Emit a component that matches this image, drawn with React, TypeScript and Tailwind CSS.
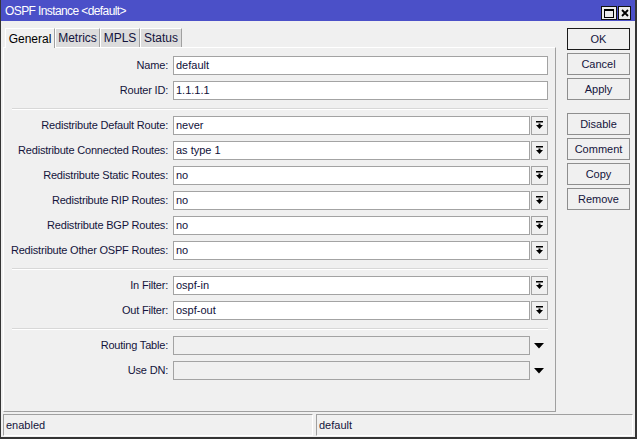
import React from "react";

const font = { fontFamily: '"Liberation Sans", Arial, sans-serif' };

function DropIcon() {
  return (
    <svg width="9" height="9" viewBox="0 0 9 9">
      <rect x="1" y="0" width="7" height="1.5" fill="#000" />
      <rect x="3.5" y="2.5" width="2" height="2" fill="#000" />
      <polygon points="1,4 8,4 4.5,8" fill="#000" />
    </svg>
  );
}

function Label({ text }: { text: string }) {
  return (
    <div className="w-[164px] shrink-0 text-right text-[#14143c] tracking-[-0.2px] whitespace-nowrap">
      {text}
    </div>
  );
}

function TextRow({ label, value }: { label: string; value: string }) {
  return (
    <div className="flex items-center h-[19px]">
      <Label text={label} />
      <div className="ml-[5px] flex-1 h-[19px] bg-white border border-[#a3a3a3] flex items-center pl-[2px] text-[#10103a]">
        {value}
      </div>
    </div>
  );
}

function DropRow({ label, value }: { label: string; value: string }) {
  return (
    <div className="flex items-center h-[19px]">
      <Label text={label} />
      <div className="ml-[5px] flex-1 h-[19px] bg-white border border-[#a3a3a3] flex items-center pl-[2px] text-[#10103a]">
        {value}
      </div>
      <div className="ml-[1px] w-[17px] h-[19px] border border-[#a3a3a3] bg-[#f0f0f0] flex items-center justify-center">
        <DropIcon />
      </div>
    </div>
  );
}

function DisabledRow({ label }: { label: string }) {
  return (
    <div className="flex items-center h-[19px]">
      <Label text={label} />
      <div className="ml-[5px] flex-1 h-[19px] bg-[#f0f0f0] border border-[#a3a3a3]" />
      <div className="w-[18px] h-[19px] flex items-center justify-center">
        <svg width="10" height="6" viewBox="0 0 10 6">
          <polygon points="0,0 10,0 5,5.5" fill="#000" />
        </svg>
      </div>
    </div>
  );
}

function Sep() {
  return <div className="ml-[8px] mt-[2px] h-[2px] border-t border-[#d8d8d8] border-b border-b-white" />;
}

function Btn({ text, primary }: { text: string; primary?: boolean }) {
  return (
    <div
      className={
        "w-[63px] h-[22px] flex items-center justify-center text-[#14143c] bg-[#f0f0f0] " +
        (primary ? "border border-[#1a1a1a]" : "border border-[#8e8e8e]")
      }
    >
      {text}
    </div>
  );
}

export default function App() {
  return (
    <div
      className="w-[637px] h-[439px] bg-[#f0f0f0] flex flex-col border-l border-r-2 border-b-2 border-[#353535] text-[11px] text-black overflow-hidden"
      style={font}
    >
      {/* Title bar */}
      <div className="h-[21px] shrink-0 bg-[#4b50c8] flex items-center pl-[4px] pr-[4px]">
        <div className="text-white text-[12px] tracking-[-0.6px] flex-1">OSPF Instance &lt;default&gt;</div>
        <div className="flex gap-[1px] self-start mt-[6px]">
          <div className="w-[16px] h-[14px] bg-[#ececec] border border-[#111] flex items-center justify-center">
            <div className="w-[10px] h-[9px] border border-black border-t-2" />
          </div>
          <div className="w-[13px] h-[14px] bg-[#ececec] border border-[#111] flex items-center justify-center">
            <svg width="8" height="8" viewBox="0 0 8 8">
              <path d="M1 1 L7 7 M7 1 L1 7" stroke="#000" strokeWidth="1.8" />
            </svg>
          </div>
        </div>
      </div>

      {/* Body */}
      <div className="flex flex-1 min-h-0">
        <div className="w-[553px] ml-[2px] flex flex-col pt-[6px] pb-[1px]">
          {/* Tabs */}
          <div className="flex items-end h-[20px] pl-[2px]">
            <div className="h-[20px] w-[50px] bg-[#f0f0f0] border-t border-l border-white border-r border-r-[#a0a0a0] flex items-center justify-center text-[12px] text-black relative top-[1px]">
              General
            </div>
            <div className="h-[19px] w-[45px] bg-[#dcdcdc] border-t border-l border-white border-r border-r-[#a0a0a0] flex items-center justify-center text-[12px] text-[#14143c]">
              Metrics
            </div>
            <div className="h-[19px] w-[40px] bg-[#dcdcdc] border-t border-l border-white border-r border-r-[#a0a0a0] flex items-center justify-center text-[12px] text-[#14143c]">
              MPLS
            </div>
            <div className="h-[19px] w-[42px] bg-[#dcdcdc] border-t border-l border-white border-r border-r-[#a0a0a0] flex items-center justify-center text-[12px] text-[#14143c]">
              Status
            </div>
          </div>
          {/* Panel */}
          <div className="flex-1 border-l border-white border-r border-r-[#a0a0a0] border-b border-b-[#a0a0a0] border-t border-t-white flex flex-col gap-[6px] pt-[8px] pr-[7px]">
            <TextRow label="Name:" value="default" />
            <TextRow label="Router ID:" value="1.1.1.1" />
            <Sep />
            <DropRow label="Redistribute Default Route:" value="never" />
            <DropRow label="Redistribute Connected Routes:" value="as type 1" />
            <DropRow label="Redistribute Static Routes:" value="no" />
            <DropRow label="Redistribute RIP Routes:" value="no" />
            <DropRow label="Redistribute BGP Routes:" value="no" />
            <DropRow label="Redistribute Other OSPF Routes:" value="no" />
            <Sep />
            <DropRow label="In Filter:" value="ospf-in" />
            <DropRow label="Out Filter:" value="ospf-out" />
            <Sep />
            <DisabledRow label="Routing Table:" />
            <DisabledRow label="Use DN:" />
          </div>
        </div>
        {/* Buttons */}
        <div className="ml-[11px] pt-[7px] flex flex-col">
          <div className="flex flex-col gap-[3px]">
            <Btn text="OK" primary />
            <Btn text="Cancel" />
            <Btn text="Apply" />
          </div>
          <div className="flex flex-col gap-[3px] mt-[13px]">
            <Btn text="Disable" />
            <Btn text="Comment" />
            <Btn text="Copy" />
            <Btn text="Remove" />
          </div>
        </div>
      </div>

      {/* Status bar */}
      <div className="h-[23px] shrink-0 flex gap-[3px] pl-[2px] pr-[2px] pb-[1px] mt-[1px]">
        <div className="w-[310px] border-t border-l border-[#a0a0a0] border-b border-r border-b-white border-r-white flex items-center pl-[2px] text-[#14143c]">
          enabled
        </div>
        <div className="flex-1 border-t border-l border-[#a0a0a0] border-b border-r border-b-white border-r-white flex items-center pl-[2px] text-[#14143c]">
          default
        </div>
      </div>
    </div>
  );
}
